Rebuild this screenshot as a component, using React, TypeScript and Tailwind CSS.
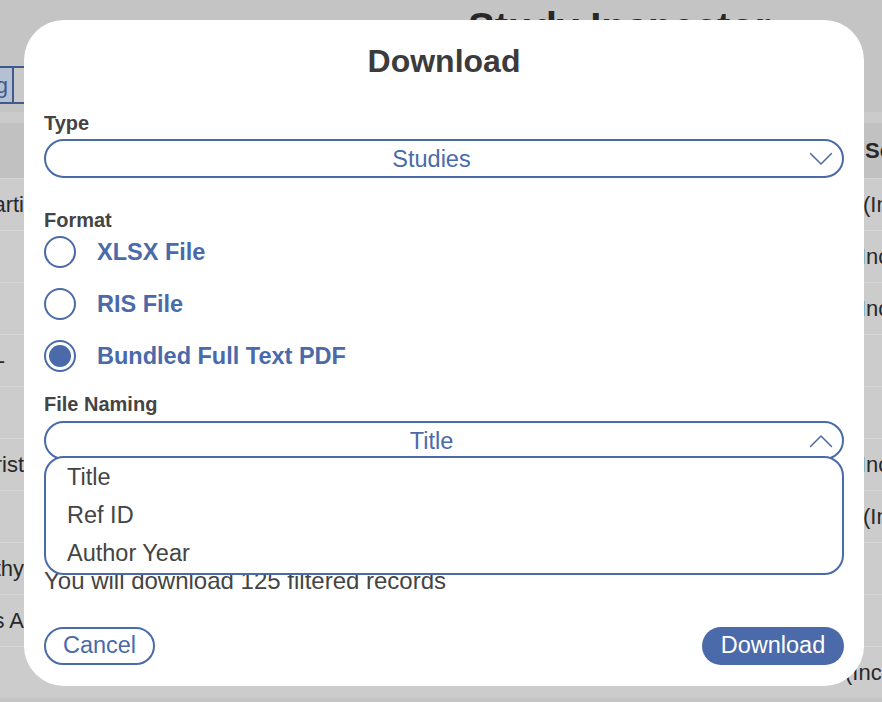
import React from "react";

const BLUE = "text-[#4a6aa9]";

const ROWS: { left: string; leftPad: string; right: string; rightPad: string }[] = [
  { left: "Smarti", leftPad: "pr-0", right: "(Included)", rightPad: "pl-[18px]" },
  { left: "", leftPad: "pr-0", right: "Included", rightPad: "pl-[15px]" },
  { left: "", leftPad: "pr-0", right: "Included", rightPad: "pl-[15px]" },
  { left: "Study -", leftPad: "pr-[19px]", right: "", rightPad: "pl-[15px]" },
  { left: "", leftPad: "pr-0", right: "", rightPad: "pl-[15px]" },
  { left: "Christ", leftPad: "pr-0", right: "Included", rightPad: "pl-[15px]" },
  { left: "", leftPad: "pr-0", right: "(Included)", rightPad: "pl-[18px]" },
  { left: "Healthy", leftPad: "pr-0", right: "", rightPad: "pl-[15px]" },
  { left: "Various A", leftPad: "pr-0", right: "", rightPad: "pl-[15px]" },
  { left: "", leftPad: "pr-0", right: "(Included)", rightPad: "pl-0" },
];

function Chevron({ up }: { up?: boolean }) {
  return (
    <svg width="24" height="14" viewBox="0 0 24 14" fill="none" className="ml-[2px] shrink-0">
      <path
        d={up ? "M1.5 12.5 L12 2 L22.5 12.5" : "M1.5 1.5 L12 12 L22.5 1.5"}
        stroke="#4a6aa9"
        strokeWidth="1.5"
        strokeLinecap="round"
        strokeLinejoin="round"
      />
    </svg>
  );
}

function Radio({ checked, label }: { checked?: boolean; label: string }) {
  return (
    <div className="flex h-[32px] items-center gap-[21px]">
      <span className="flex h-[32px] w-[32px] shrink-0 items-center justify-center rounded-full border-2 border-[#4a6aa9] bg-white">
        {checked && <span className="h-[22px] w-[22px] rounded-full bg-[#4a6aa9]" />}
      </span>
      <span className={`text-[23.5px] font-bold leading-[28px] ${BLUE}`}>{label}</span>
    </div>
  );
}

function Background() {
  return (
    <div className="flex h-[702px] w-[882px] flex-col overflow-hidden bg-[#c4c4c4] text-[#282828]">
      <div className="h-[66px] shrink-0 whitespace-nowrap pl-[468px] pt-[3px] text-[40px] font-bold leading-[48px]">
        Study Inspector
      </div>
      <div className="flex h-[38px] shrink-0">
        <div className="-ml-[96px] flex w-[110px] shrink-0 items-center justify-end border-2 border-[#3f5a8e] bg-[#b6c0d3] pr-[4px] text-[22px] text-[#3f5a8e]">
          Screening
        </div>
        <div className="w-[120px] shrink-0 border-y-2 border-r-2 border-[#3f5a8e] bg-[#c9c9c9]" />
      </div>
      <div className="mt-[8px] h-[11px] shrink-0 bg-[#cbcbcb]" />
      <div className="flex h-[55px] shrink-0 items-center bg-[#c1c1c1] text-[22px] font-bold">
        <div className="w-[845px] shrink-0" />
        <div className="shrink-0 whitespace-nowrap pl-[20px]">Score</div>
      </div>
      {ROWS.map((r, i) => (
        <div
          key={i}
          className="flex h-[52px] shrink-0 items-center border-t border-[#d6d6d6] bg-[#cccccc] text-[22px] whitespace-nowrap"
        >
          <div className={`flex w-[24px] shrink-0 justify-end ${r.leftPad}`}>
            <span className="shrink-0">{r.left}</span>
          </div>
          <div className="w-[821px] shrink-0" />
          <div className={`shrink-0 ${r.rightPad}`}>{r.right}</div>
        </div>
      ))}
    </div>
  );
}

export default function App() {
  return (
    <div
      className="relative h-[702px] w-[882px] overflow-hidden"
      style={{ fontFamily: '"Liberation Sans", Arial, sans-serif' }}
    >
      <Background />

      <div className="absolute left-[24px] top-[20px] flex h-[666px] w-[840px] flex-col rounded-[40px] bg-white px-[20px] pb-[21px] pt-[21px]">
        <h1 className="text-center text-[32px] font-bold leading-[40px] text-[#3b3b3b]">Download</h1>

        <div className="mt-[30px] text-[20px] font-bold leading-[24px] text-[#444444]">Type</div>
        <div className="mt-[4px] flex h-[39px] items-center rounded-full border-2 border-[#4a6aa9] pl-[10px] pr-[9px]">
          <span className={`flex-1 text-center text-[23.5px] leading-[28px] ${BLUE}`}>Studies</span>
          <Chevron />
        </div>

        <div className="mt-[30px] text-[20px] font-bold leading-[24px] text-[#444444]">Format</div>
        <div className="mt-[4px] flex flex-col gap-[20px]">
          <Radio label="XLSX File" />
          <Radio label="RIS File" />
          <Radio label="Bundled Full Text PDF" checked />
        </div>

        <div className="mt-[20px] text-[20px] font-bold leading-[24px] text-[#444444]">File Naming</div>
        <div className="relative mt-[5px]">
          <div className="flex h-[39px] items-center rounded-full border-2 border-[#4a6aa9] pl-[10px] pr-[9px]">
            <span className={`flex-1 text-center text-[23.5px] leading-[28px] ${BLUE}`}>Title</span>
            <Chevron up />
          </div>
          <div className="absolute left-0 right-0 top-[35px] z-10 flex flex-col rounded-[20px] border-2 border-[#4a6aa9] bg-white pl-[21px] pt-[1px] text-[23.5px] text-[#444444]">
            <div className="flex h-[38px] items-center">Title</div>
            <div className="flex h-[38px] items-center">Ref ID</div>
            <div className="flex h-[38px] items-center">Author Year</div>
          </div>
        </div>

        <p className="mt-[107px] text-[24px] leading-[28px] text-[#444444]">You will download 125 filtered records</p>

        <div className="mt-[32px] flex items-center justify-between">
          <button
            type="button"
            className={`flex h-[38px] w-[111px] items-center justify-center rounded-full border-2 border-[#4a6aa9] bg-white text-[23.5px] ${BLUE}`}
          >
            Cancel
          </button>
          <button
            type="button"
            className="flex h-[38px] w-[142px] items-center justify-center rounded-full bg-[#4a6aa9] text-[23.5px] text-white"
          >
            Download
          </button>
        </div>
      </div>
    </div>
  );
}
